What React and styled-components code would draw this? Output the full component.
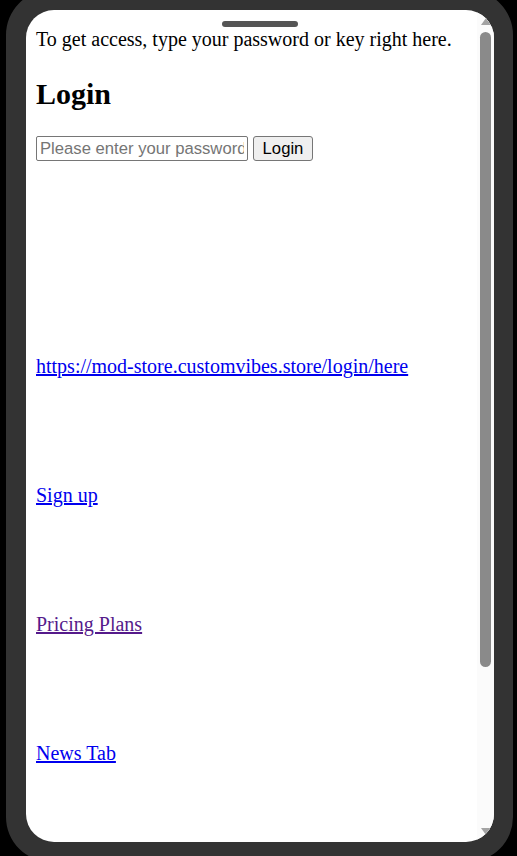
import React from 'react';
import styled, { createGlobalStyle } from 'styled-components';

const GlobalStyle = createGlobalStyle`
  html, body {
    margin: 0;
    padding: 0;
    background: #000;
    overflow: hidden;
  }
`;

const Phone = styled.div`
  box-sizing: border-box;
  width: 507px;
  height: 872px;
  margin: -10px 0 0 6px;
  border: 20px solid #333;
  border-right-width: 19px;
  border-radius: 45px;
  background: #333;
`;

const Screen = styled.div`
  position: relative;
  display: flex;
  width: 100%;
  height: 100%;
  overflow: hidden;
  border-radius: 28px;
  background: #fff;
`;

const Notch = styled.div`
  position: absolute;
  top: 11px;
  left: 50%;
  width: 76px;
  height: 6px;
  margin-left: -38px;
  border-radius: 3px;
  background: #555;
`;

const Content = styled.main`
  flex: 1;
  min-width: 0;
  padding: 18px 0 0 10px;
  color: #000;
  font-family: "Liberation Serif", "Times New Roman", serif;
  font-size: 20px;
  line-height: 23px;
`;

const Intro = styled.p`
  margin: 0;
  white-space: nowrap;
`;

const Heading = styled.h2`
  margin: 26px 0 25px;
  font-size: 30px;
  line-height: 34px;
  font-weight: 700;
`;

const LoginRow = styled.form`
  display: flex;
  align-items: stretch;
  gap: 5px;
  height: 25px;
`;

const PasswordInput = styled.input`
  box-sizing: border-box;
  width: 212px;
  height: 25px;
  padding: 0 3px;
  border: 1px solid #767676;
  border-radius: 2px;
  font-family: "Liberation Sans", Arial, sans-serif;
  font-size: 16.67px;
  color: #000;
  background: #fff;

  &::placeholder {
    color: #757575;
  }
`;

const LoginButton = styled.button`
  box-sizing: border-box;
  width: 60px;
  height: 25px;
  padding: 0;
  border: 1px solid #767676;
  border-radius: 3px;
  background: #efefef;
  color: #000;
  font-family: "Liberation Sans", Arial, sans-serif;
  font-size: 16.67px;
`;

const LinkList = styled.nav`
  display: flex;
  flex-direction: column;
  gap: 106px;
  margin-top: 194px;
`;

const LinkLine = styled.div`
  height: 23px;
`;

const TextLink = styled.a`
  color: ${({ $visited }) => ($visited ? '#551a8b' : '#0000ee')};
  text-decoration: underline;
`;

const Scrollbar = styled.div`
  display: flex;
  flex-direction: column;
  align-items: center;
  width: 17px;
  background: #fbfbfb;
`;

const ArrowButton = styled.div`
  display: flex;
  align-items: center;
  justify-content: center;
  height: 22px;
  flex-shrink: 0;

  &::before {
    content: '';
    width: 0;
    height: 0;
    border-left: 5px solid transparent;
    border-right: 5px solid transparent;
    ${({ $down }) => ($down ? 'border-top: 7px solid #a3a3a3;' : 'border-bottom: 7px solid #a3a3a3;')}
  }
`;

const Thumb = styled.div`
  width: 11px;
  height: 635px;
  border-radius: 6px;
  background: #8a8a8a;
`;

const Spacer = styled.div`
  flex: 1;
`;

const links = [
  { label: 'https://mod-store.customvibes.store/login/here', href: '#login' },
  { label: 'Sign up', href: '#signup' },
  { label: 'Pricing Plans', href: '#pricing', visited: true },
  { label: 'News Tab', href: '#news' },
];

export default function App() {
  return (
    <>
      <GlobalStyle />
      <Phone>
        <Screen>
          <Notch />
          <Content>
            <Intro>To get access, type your password or key right here.</Intro>
            <Heading>Login</Heading>
            <LoginRow onSubmit={(e) => e.preventDefault()}>
              <PasswordInput type="password" placeholder="Please enter your password" />
              <LoginButton type="submit">Login</LoginButton>
            </LoginRow>
            <LinkList>
              {links.map((link) => (
                <LinkLine key={link.href}>
                  <TextLink href={link.href} $visited={link.visited}>
                    {link.label}
                  </TextLink>
                </LinkLine>
              ))}
            </LinkList>
          </Content>
          <Scrollbar>
            <ArrowButton />
            <Thumb />
            <Spacer />
            <ArrowButton $down />
          </Scrollbar>
        </Screen>
      </Phone>
    </>
  );
}
